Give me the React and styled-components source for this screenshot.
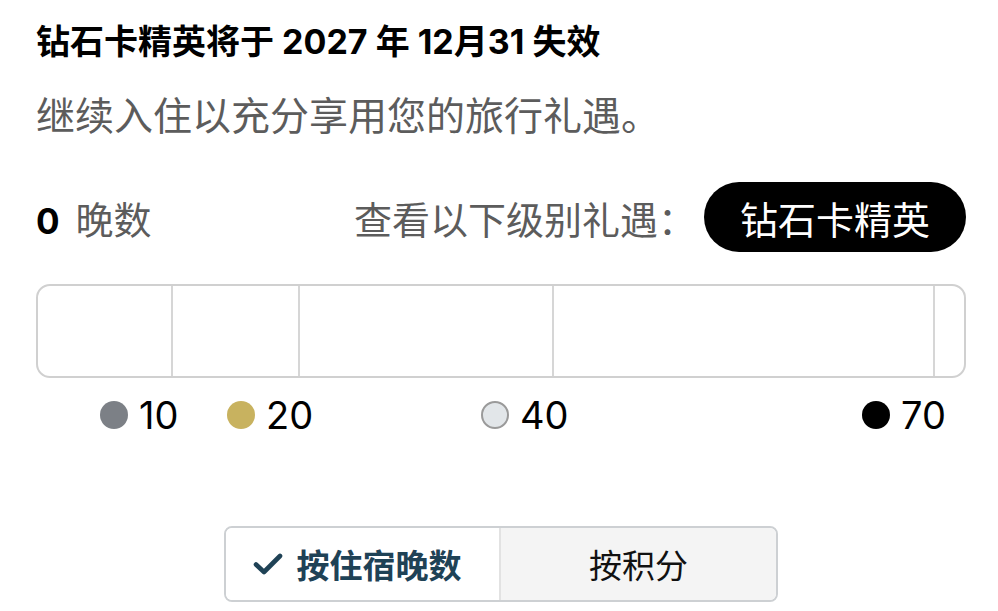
import React from 'react';
import styled, { createGlobalStyle } from 'styled-components';

// night thresholds for each tier, drawn on the progress bar
const tiers = [
  { nights: 10, color: '#7c8086' },
  { nights: 20, color: '#c8b25f' },
  { nights: 40, color: '#e2e6e9', ring: '#9a9a9a' },
  { nights: 70, color: '#000000' },
];

const PX_PER_NIGHT = 12.7;
const START = 8;

const trackColumns = () => {
  let prev = 0;
  const cols = tiers.map((t, i) => {
    const w = (t.nights - prev) * PX_PER_NIGHT + (i === 0 ? START : 0);
    prev = t.nights;
    return `${Math.round(w)}px`;
  });
  return [...cols, 'minmax(0, 1fr)'].join(' ');
};

const GlobalStyle = createGlobalStyle`
  body {
    margin: 0;
    background: #fff;
    font-family: Inter, "Noto Sans CJK SC", sans-serif;
  }
`;

function App() {
  const columns = trackColumns();

  return (
    <>
      <GlobalStyle />
      <Page>
        <Title>钻石卡精英将于 2027 年 12月31 失效</Title>
        <Subtitle>继续入住以充分享用您的旅行礼遇。</Subtitle>

        <InfoRow>
          <NightCount>
            <strong>0</strong>
            <span>晚数</span>
          </NightCount>
          <TierPicker>
            <PickerLabel>查看以下级别礼遇：</PickerLabel>
            <TierPill>钻石卡精英</TierPill>
          </TierPicker>
        </InfoRow>

        <ProgressBar $columns={columns}>
          {tiers.map((t) => (
            <Segment key={t.nights} $divider />
          ))}
          <Segment />
        </ProgressBar>

        <Legend $columns={columns}>
          {tiers.map((t, i) => (
            <LegendItem key={t.nights} $col={i + 2}>
              <Dot $color={t.color} $ring={t.ring} />
              <LegendLabel>{t.nights}</LegendLabel>
            </LegendItem>
          ))}
        </Legend>

        <Toggle>
          <ToggleOption $active>
            <svg width="32" height="24" viewBox="0 0 32 24" fill="none">
              <path
                d="M4 12.5 L12 20 L28 4"
                stroke="#1f4256"
                strokeWidth="4.6"
                strokeLinecap="round"
                strokeLinejoin="round"
              />
            </svg>
            按住宿晚数
          </ToggleOption>
          <ToggleOption>按积分</ToggleOption>
        </Toggle>
      </Page>
    </>
  );
}

export default App;

const Page = styled.div`
  padding: 21px 32px 0 36px;
  display: flex;
  flex-direction: column;
`;

const Title = styled.h1`
  margin: 0;
  font-size: 34px;
  line-height: 42px;
  font-weight: 700;
  color: #000;
`;

const Subtitle = styled.p`
  margin: 30px 0 0;
  font-size: 39px;
  line-height: 46px;
  color: #5c5c5c;
`;

const InfoRow = styled.div`
  margin-top: 43px;
  height: 70px;
  display: flex;
  align-items: center;
  justify-content: space-between;
`;

const NightCount = styled.div`
  display: flex;
  align-items: baseline;
  gap: 16px;

  > strong {
    font-size: 35px;
    font-weight: 700;
    color: #000;
  }

  > span {
    font-size: 38px;
    color: #5c5c5c;
  }
`;

const TierPicker = styled.div`
  display: flex;
  align-items: center;
  gap: 8px;
`;

const PickerLabel = styled.span`
  font-size: 38px;
  color: #5c5c5c;
`;

const TierPill = styled.button`
  height: 70px;
  padding: 0 36px;
  border: none;
  border-radius: 35px;
  background: #000;
  color: #fff;
  font-family: inherit;
  font-size: 38px;
  cursor: pointer;
`;

const ProgressBar = styled.div`
  margin-top: 32px;
  height: 94px;
  box-sizing: border-box;
  border: 2px solid #d0d0d0;
  border-radius: 14px;
  display: grid;
  grid-template-columns: ${(p) => p.$columns};
`;

const Segment = styled.div`
  border-right: ${(p) => (p.$divider ? '2px solid #d6d6d6' : 'none')};
`;

const Legend = styled.div`
  margin-top: 17px;
  height: 40px;
  padding: 0 2px;
  display: grid;
  grid-template-columns: ${(p) => p.$columns};
  align-items: center;
`;

const LegendItem = styled.div`
  grid-column: ${(p) => p.$col};
  grid-row: 1;
  justify-self: start;
  margin-left: -73px;
  display: flex;
  align-items: center;
  gap: 11px;
  white-space: nowrap;
`;

const Dot = styled.span`
  width: 28px;
  height: 28px;
  box-sizing: border-box;
  border-radius: 50%;
  background: ${(p) => p.$color};
  border: ${(p) => (p.$ring ? `2.5px solid ${p.$ring}` : 'none')};
`;

const LegendLabel = styled.span`
  font-size: 38px;
  line-height: 40px;
  color: #000;
`;

const Toggle = styled.div`
  margin: 91px auto 0;
  width: 554px;
  height: 76px;
  box-sizing: border-box;
  border: 2px solid #cdd0d3;
  border-radius: 8px;
  overflow: hidden;
  display: grid;
  grid-template-columns: 1fr 1fr;
`;

const ToggleOption = styled.button`
  display: flex;
  align-items: center;
  justify-content: center;
  gap: 13px;
  border: none;
  border-right: ${(p) => (p.$active ? '2px solid #e2e2e2' : 'none')};
  background: ${(p) => (p.$active ? '#ffffff' : '#f4f4f4')};
  color: ${(p) => (p.$active ? '#1f4256' : '#111111')};
  font-family: inherit;
  font-size: 33px;
  font-weight: ${(p) => (p.$active ? 700 : 400)};
  padding: ${(p) => (p.$active ? '0 12px 0 0' : '0')};
  cursor: pointer;
`;
